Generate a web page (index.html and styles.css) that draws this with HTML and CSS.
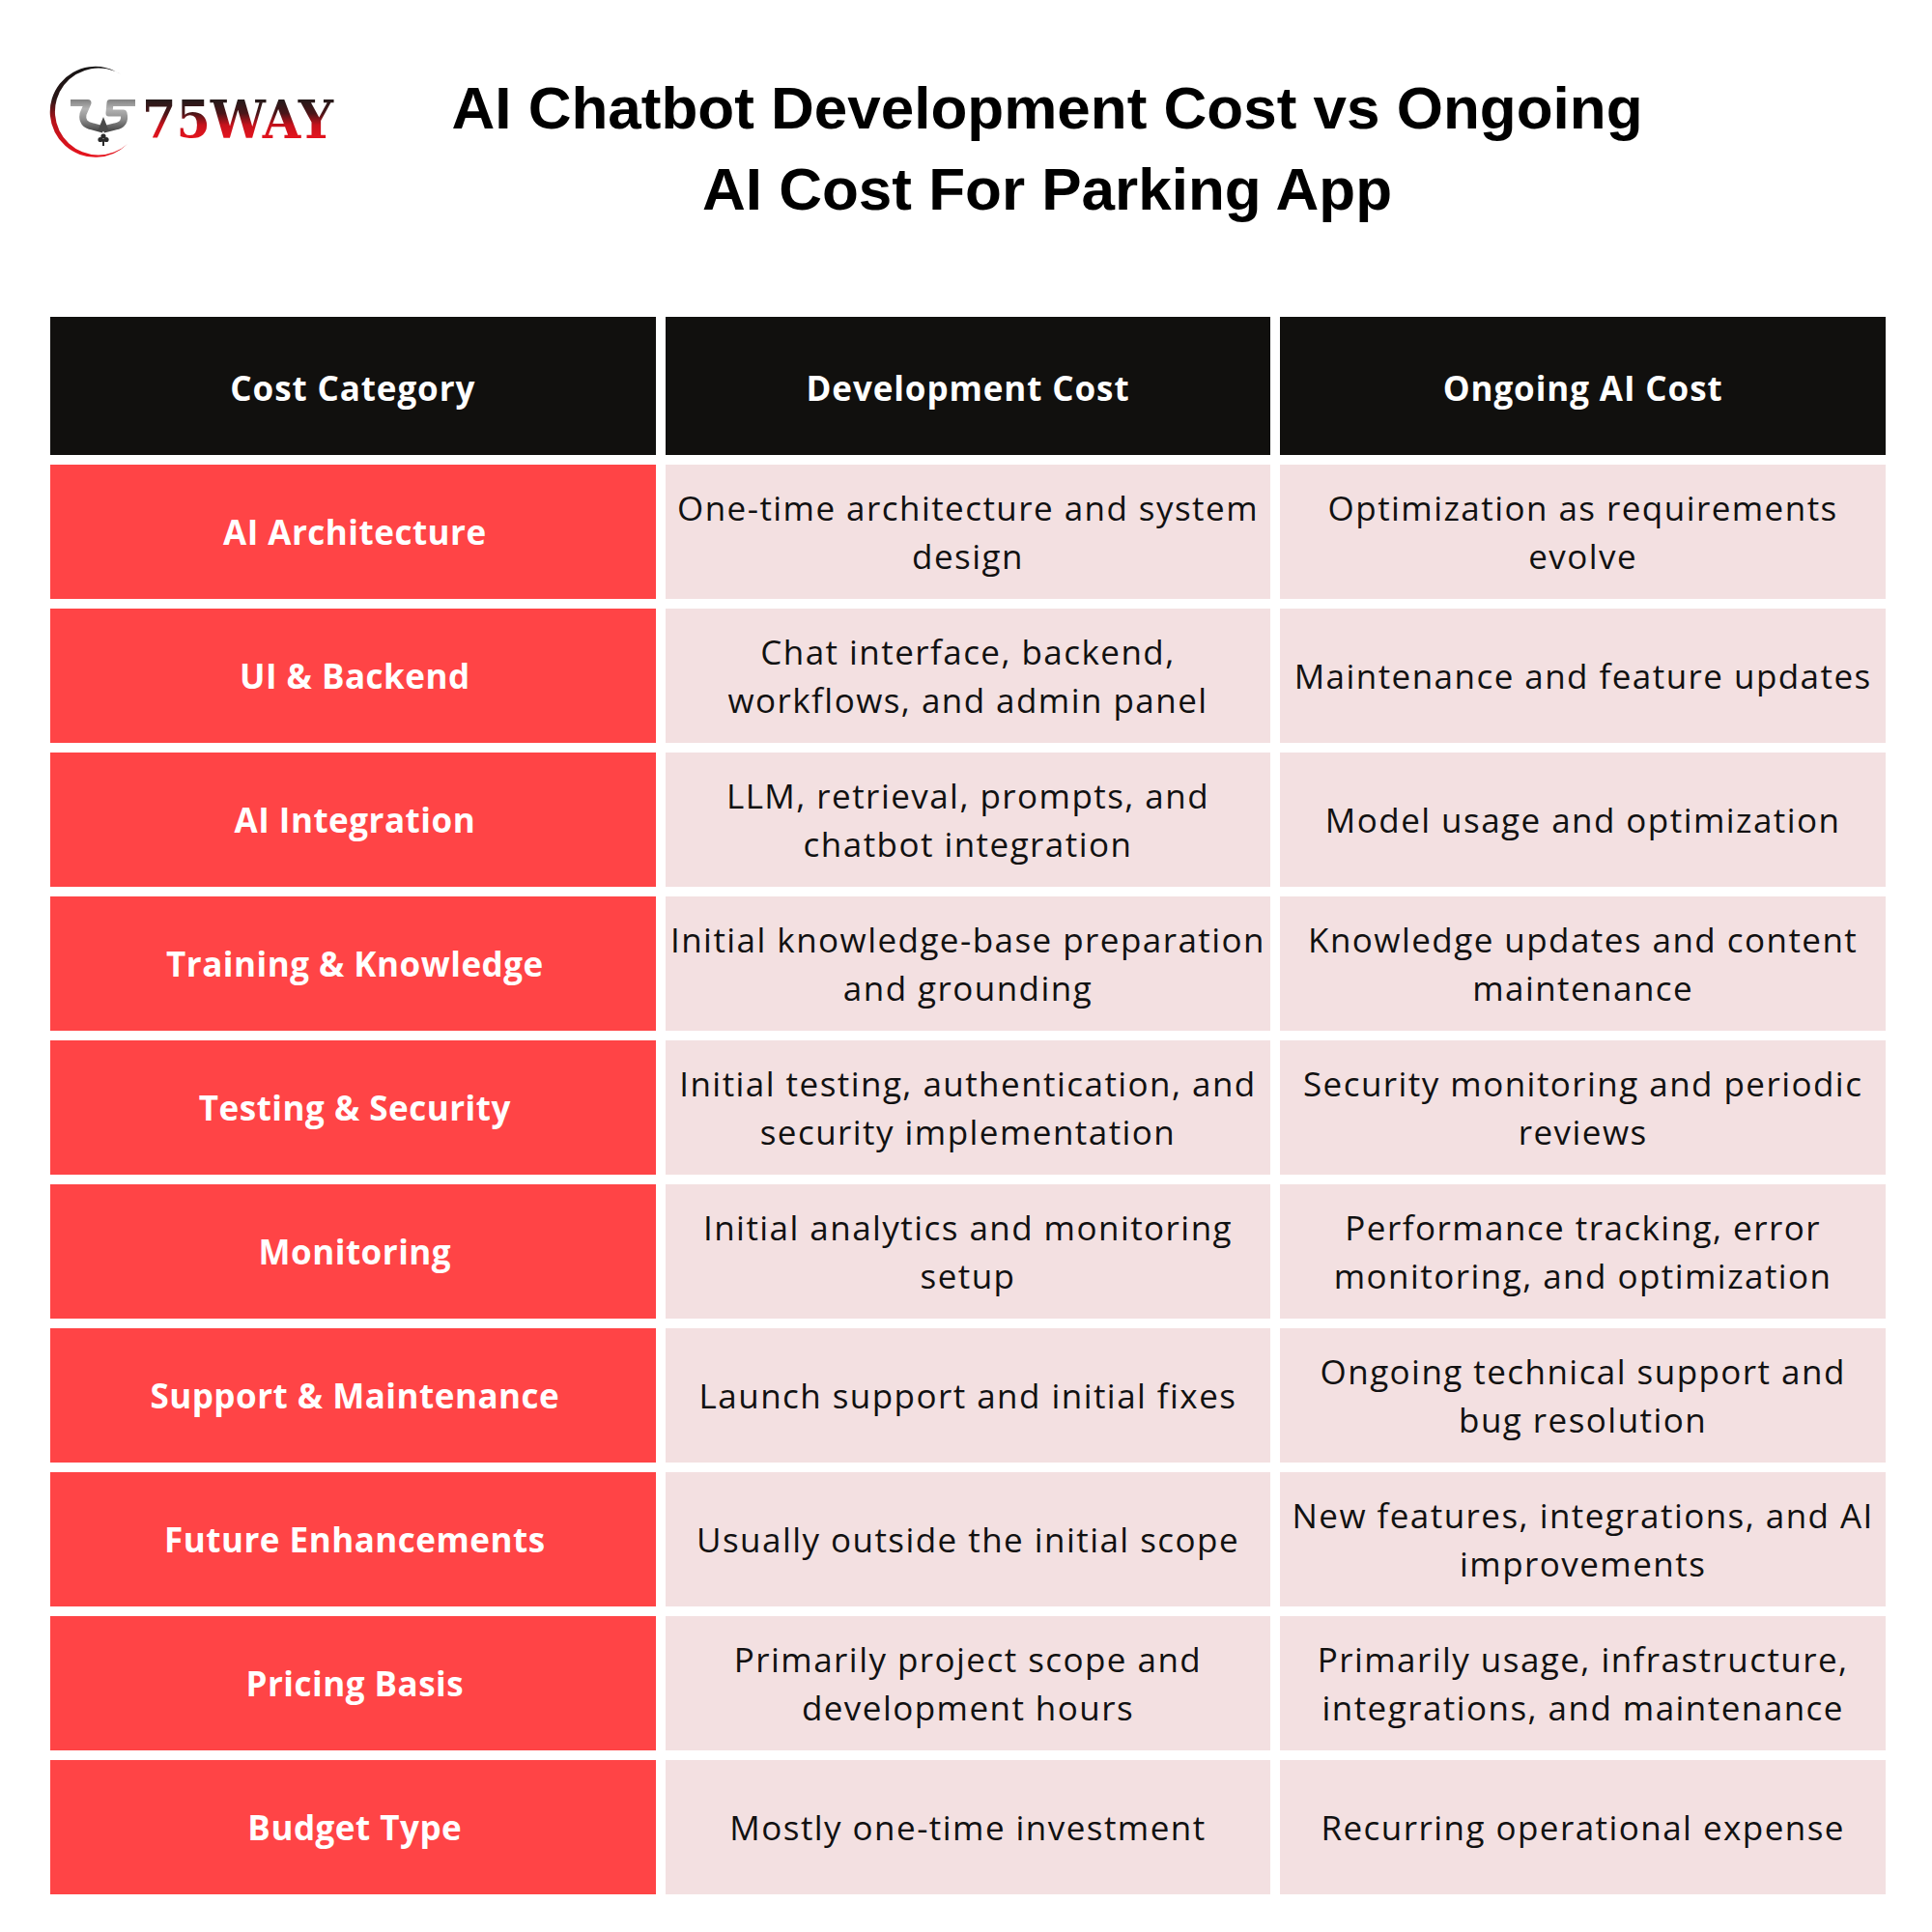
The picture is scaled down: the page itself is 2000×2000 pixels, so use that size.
FILE: index.html
```html
<!DOCTYPE html>
<html lang="en">
<head>
<meta charset="utf-8">
<title>AI Chatbot Development Cost vs Ongoing AI Cost For Parking App</title>
<link rel="stylesheet" href="styles.css">
</head>
<body>
<div class="page">
  <header class="top">
    <svg class="logo" width="320" height="110" viewBox="40 60 320 110" xmlns="http://www.w3.org/2000/svg" aria-label="75WAY">
      <defs>
        <linearGradient id="arcGrad" x1="0" y1="70" x2="0" y2="163" gradientUnits="userSpaceOnUse">
          <stop offset="0" stop-color="#161414"/>
          <stop offset="0.35" stop-color="#2a1616"/>
          <stop offset="0.6" stop-color="#b8121a"/>
          <stop offset="1" stop-color="#e8141e"/>
        </linearGradient>
        <linearGradient id="symGrad" x1="0" y1="102" x2="0" y2="138" gradientUnits="userSpaceOnUse">
          <stop offset="0" stop-color="#7a7a7a"/>
          <stop offset="0.3" stop-color="#b4b4b4"/>
          <stop offset="0.6" stop-color="#8c8c8c"/>
          <stop offset="1" stop-color="#3a3a3a"/>
        </linearGradient>
        <linearGradient id="txtGrad" x1="0" y1="103" x2="0" y2="144" gradientUnits="userSpaceOnUse">
          <stop offset="0" stop-color="#241a1a"/>
          <stop offset="0.35" stop-color="#4a1518"/>
          <stop offset="0.65" stop-color="#c8121c"/>
          <stop offset="1" stop-color="#e6141e"/>
        </linearGradient>
      </defs>
      <path d="M126,77.5 A47,47 0 1 0 132,149 A45,45 0 1 1 126,77.5 Z" fill="url(#arcGrad)"/>
      <g fill="none" stroke="url(#symGrad)" stroke-width="7" stroke-linejoin="round">
        <path d="M73,106.5 L91,106.5 L86,118 Q84,129 96,131 L107,134"/>
        <path d="M140,106.5 L114,106.5 L113,117 L128,117 Q131,129 119,131 L107,134"/>
      </g>
      <path d="M101,136 L107,121 L113,136 Z" fill="#4a4a4a"/>
      <g fill="#2a2a2a">
        <circle cx="107" cy="141" r="2.6"/>
        <circle cx="104" cy="144.5" r="2.6"/>
        <circle cx="110" cy="144.5" r="2.6"/>
        <rect x="106" y="144" width="2" height="7"/>
      </g>
      <text x="147" y="143" class="logo-text" textLength="198" lengthAdjust="spacingAndGlyphs" fill="url(#txtGrad)">75WAY</text>
    </svg>
    <h1 class="title">AI Chatbot Development Cost vs Ongoing<br>AI Cost For Parking App</h1>
  </header>

  <div class="table">
    <div class="cell head">Cost Category</div>
    <div class="cell head">Development Cost</div>
    <div class="cell head">Ongoing AI Cost</div>

    <div class="cell label">AI Architecture</div>
    <div class="cell body">One-time architecture and system<br>design</div>
    <div class="cell body">Optimization as requirements<br>evolve</div>

    <div class="cell label">UI &amp; Backend</div>
    <div class="cell body">Chat interface, backend,<br>workflows, and admin panel</div>
    <div class="cell body">Maintenance and feature updates</div>

    <div class="cell label">AI Integration</div>
    <div class="cell body">LLM, retrieval, prompts, and<br>chatbot integration</div>
    <div class="cell body">Model usage and optimization</div>

    <div class="cell label">Training &amp; Knowledge</div>
    <div class="cell body">Initial knowledge-base preparation<br>and grounding</div>
    <div class="cell body">Knowledge updates and content<br>maintenance</div>

    <div class="cell label">Testing &amp; Security</div>
    <div class="cell body">Initial testing, authentication, and<br>security implementation</div>
    <div class="cell body">Security monitoring and periodic<br>reviews</div>

    <div class="cell label">Monitoring</div>
    <div class="cell body">Initial analytics and monitoring<br>setup</div>
    <div class="cell body">Performance tracking, error<br>monitoring, and optimization</div>

    <div class="cell label">Support &amp; Maintenance</div>
    <div class="cell body">Launch support and initial fixes</div>
    <div class="cell body">Ongoing technical support and<br>bug resolution</div>

    <div class="cell label">Future Enhancements</div>
    <div class="cell body">Usually outside the initial scope</div>
    <div class="cell body">New features, integrations, and AI<br>improvements</div>

    <div class="cell label">Pricing Basis</div>
    <div class="cell body">Primarily project scope and<br>development hours</div>
    <div class="cell body">Primarily usage, infrastructure,<br>integrations, and maintenance</div>

    <div class="cell label">Budget Type</div>
    <div class="cell body">Mostly one-time investment</div>
    <div class="cell body">Recurring operational expense</div>
  </div>
</div>
</body>
</html>
```
FILE: styles.css
```css
html, body {
  margin: 0;
  padding: 0;
  background: #ffffff;
}

.page {
  width: 2000px;
  box-sizing: border-box;
  padding: 60px 48px 0 52px;
}

.top {
  display: grid;
  grid-template-columns: 310px 1468px;
  align-items: start;
  margin-left: -12px;
}

.logo {
  display: block;
}

.logo-text {
  font-family: "DejaVu Serif", "Liberation Serif", serif;
  font-weight: 700;
  font-size: 55px;
}

.title {
  margin: 0;
  padding-top: 10px;
  font-family: "Liberation Sans", Arial, sans-serif;
  font-weight: 700;
  font-size: 62px;
  line-height: 84px;
  text-align: center;
  color: #000000;
}

.table {
  margin-top: 90px;
  display: grid;
  grid-template-columns: repeat(3, 1fr);
  grid-template-rows: 143px;
  grid-auto-rows: 139px;
  gap: 10px;
  width: 1900px;
}

.cell {
  display: flex;
  align-items: center;
  justify-content: center;
  text-align: center;
  font-family: "Open Sans", "Noto Sans", sans-serif;
  font-size: 35px;
  line-height: 50px;
  letter-spacing: 1.45px;
  white-space: nowrap;
  padding: 0 2px;
}

.head {
  background: #11100e;
  color: #ffffff;
  font-weight: 700;
  letter-spacing: 0.9px;
  padding-top: 4px;
}

.label {
  background: #ff4446;
  color: #ffffff;
  font-weight: 700;
  letter-spacing: 0.5px;
  padding-left: 6px;
}

.body {
  background: #f3e0e1;
  color: #111111;
  font-weight: 400;
}
```
